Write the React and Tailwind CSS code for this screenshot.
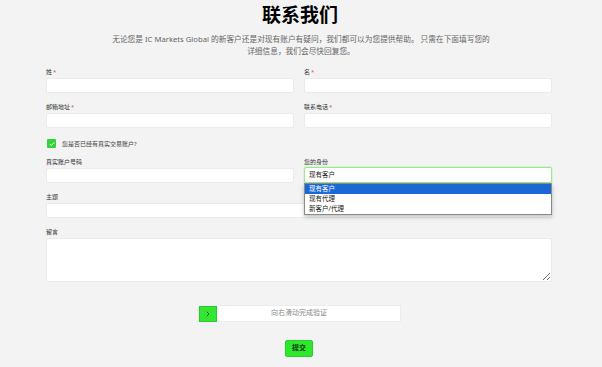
import React from "react";

const font = { fontFamily: '"Noto Sans", "Noto Sans CJK SC", sans-serif' };

const Label = ({ children, required }) => (
  <div className="h-[8px] leading-[8px] text-[6px] text-[#333] mb-[2px]">
    {children}
    {required && <span className="text-[#e05252] ml-[1px]">*</span>}
  </div>
);

const Input = () => (
  <input className="block w-full h-[15px] bg-white rounded-[2px] border border-[#ebebeb] outline-none" />
);

const options = ["现有客户", "现有代理", "新客户/代理"];

export default function App() {
  return (
    <div className="min-h-[367px] bg-[#f3f3f3] pt-[4px]" style={font}>
      <h1 className="ml-[-2px] text-center text-[19px] leading-[22px] font-bold text-black">联系我们</h1>
      <p className="mt-[7px] text-center text-[7.7px] leading-[12px] text-[#666]">
        无论您是 IC Markets Global 的新客户还是对现有账户有疑问，我们都可以为您提供帮助。 只需在下面填写您的
        <br />
        详细信息，我们会尽快回复您。
      </p>

      <form className="ml-[46px] mt-[11px] w-[506px] flex flex-col gap-y-[10px]">
        <div className="grid grid-cols-2 gap-x-[10px]">
          <div>
            <Label required>姓</Label>
            <Input />
          </div>
          <div>
            <Label required>名</Label>
            <Input />
          </div>
        </div>

        <div className="grid grid-cols-2 gap-x-[10px]">
          <div>
            <Label required>邮箱地址</Label>
            <Input />
          </div>
          <div>
            <Label required>联系电话</Label>
            <Input />
          </div>
        </div>

        <div className="mt-[1px] flex items-center h-[9px]">
          <span className="ml-[1px] w-[9px] h-[9px] rounded-[1px] bg-[#33d23a] flex items-center justify-center">
            <svg width="6" height="6" viewBox="0 0 12 12" fill="none">
              <path d="M2 6.5l2.5 2.5L10 3.5" stroke="white" strokeWidth="2" strokeLinecap="round" strokeLinejoin="round" />
            </svg>
          </span>
          <span className="ml-[6px] text-[6px] leading-[8px] text-[#444]">您是否已经有真实交易账户?</span>
        </div>

        <div className="grid grid-cols-2 gap-x-[10px]">
          <div>
            <Label>真实账户号码</Label>
            <Input />
          </div>
          <div className="relative">
            <Label>您的身份</Label>
            <div className="h-[16px] -mt-[1px] bg-white rounded-[2px] border border-[#9fe598] ring-1 ring-[#d4f5d0] flex items-center pl-[4px] text-[6.5px] text-[#222]">
              现有客户
            </div>
            <ul className="absolute left-0 right-0 top-[25px] z-10 bg-white border border-[#8a8a8a] shadow-[0_2px_4px_rgba(0,0,0,0.25)] text-[6.5px] leading-[10px] text-[#222]">
              {options.map((o, i) => (
                <li key={o} className={i === 0 ? "bg-[#1a68d6] text-white pl-[4px]" : "pl-[4px]"}>
                  {o}
                </li>
              ))}
            </ul>
          </div>
        </div>

        <div>
          <Label>主题</Label>
          <Input />
        </div>

        <div>
          <Label>留言</Label>
          <textarea className="block w-full h-[44px] bg-white rounded-[2px] border border-[#ebebeb] outline-none" />
        </div>

        <div className="mt-[13px] mx-auto relative w-[203px] h-[17px] bg-white border border-[#ececec] flex items-center justify-center">
          <span className="absolute left-0 top-0 w-[18px] h-[16px] bg-[#33e633] border border-[#2cc82c] flex items-center justify-center">
            <svg width="6" height="6" viewBox="0 0 12 12" fill="none">
              <path d="M4 2l4 4-4 4" stroke="#1d3b1d" strokeWidth="1.8" strokeLinecap="round" strokeLinejoin="round" />
            </svg>
          </span>
          <span className="text-[7px] text-[#8a8a8a]">向右滑动完成验证</span>
        </div>

        <button
          type="button"
          className="mt-[8px] mx-auto w-[28px] h-[17px] rounded-[2px] bg-[#2ee82e] border border-[#29d029] text-[7px] font-bold text-[#183818] flex items-center justify-center"
        >
          提交
        </button>
      </form>
    </div>
  );
}
